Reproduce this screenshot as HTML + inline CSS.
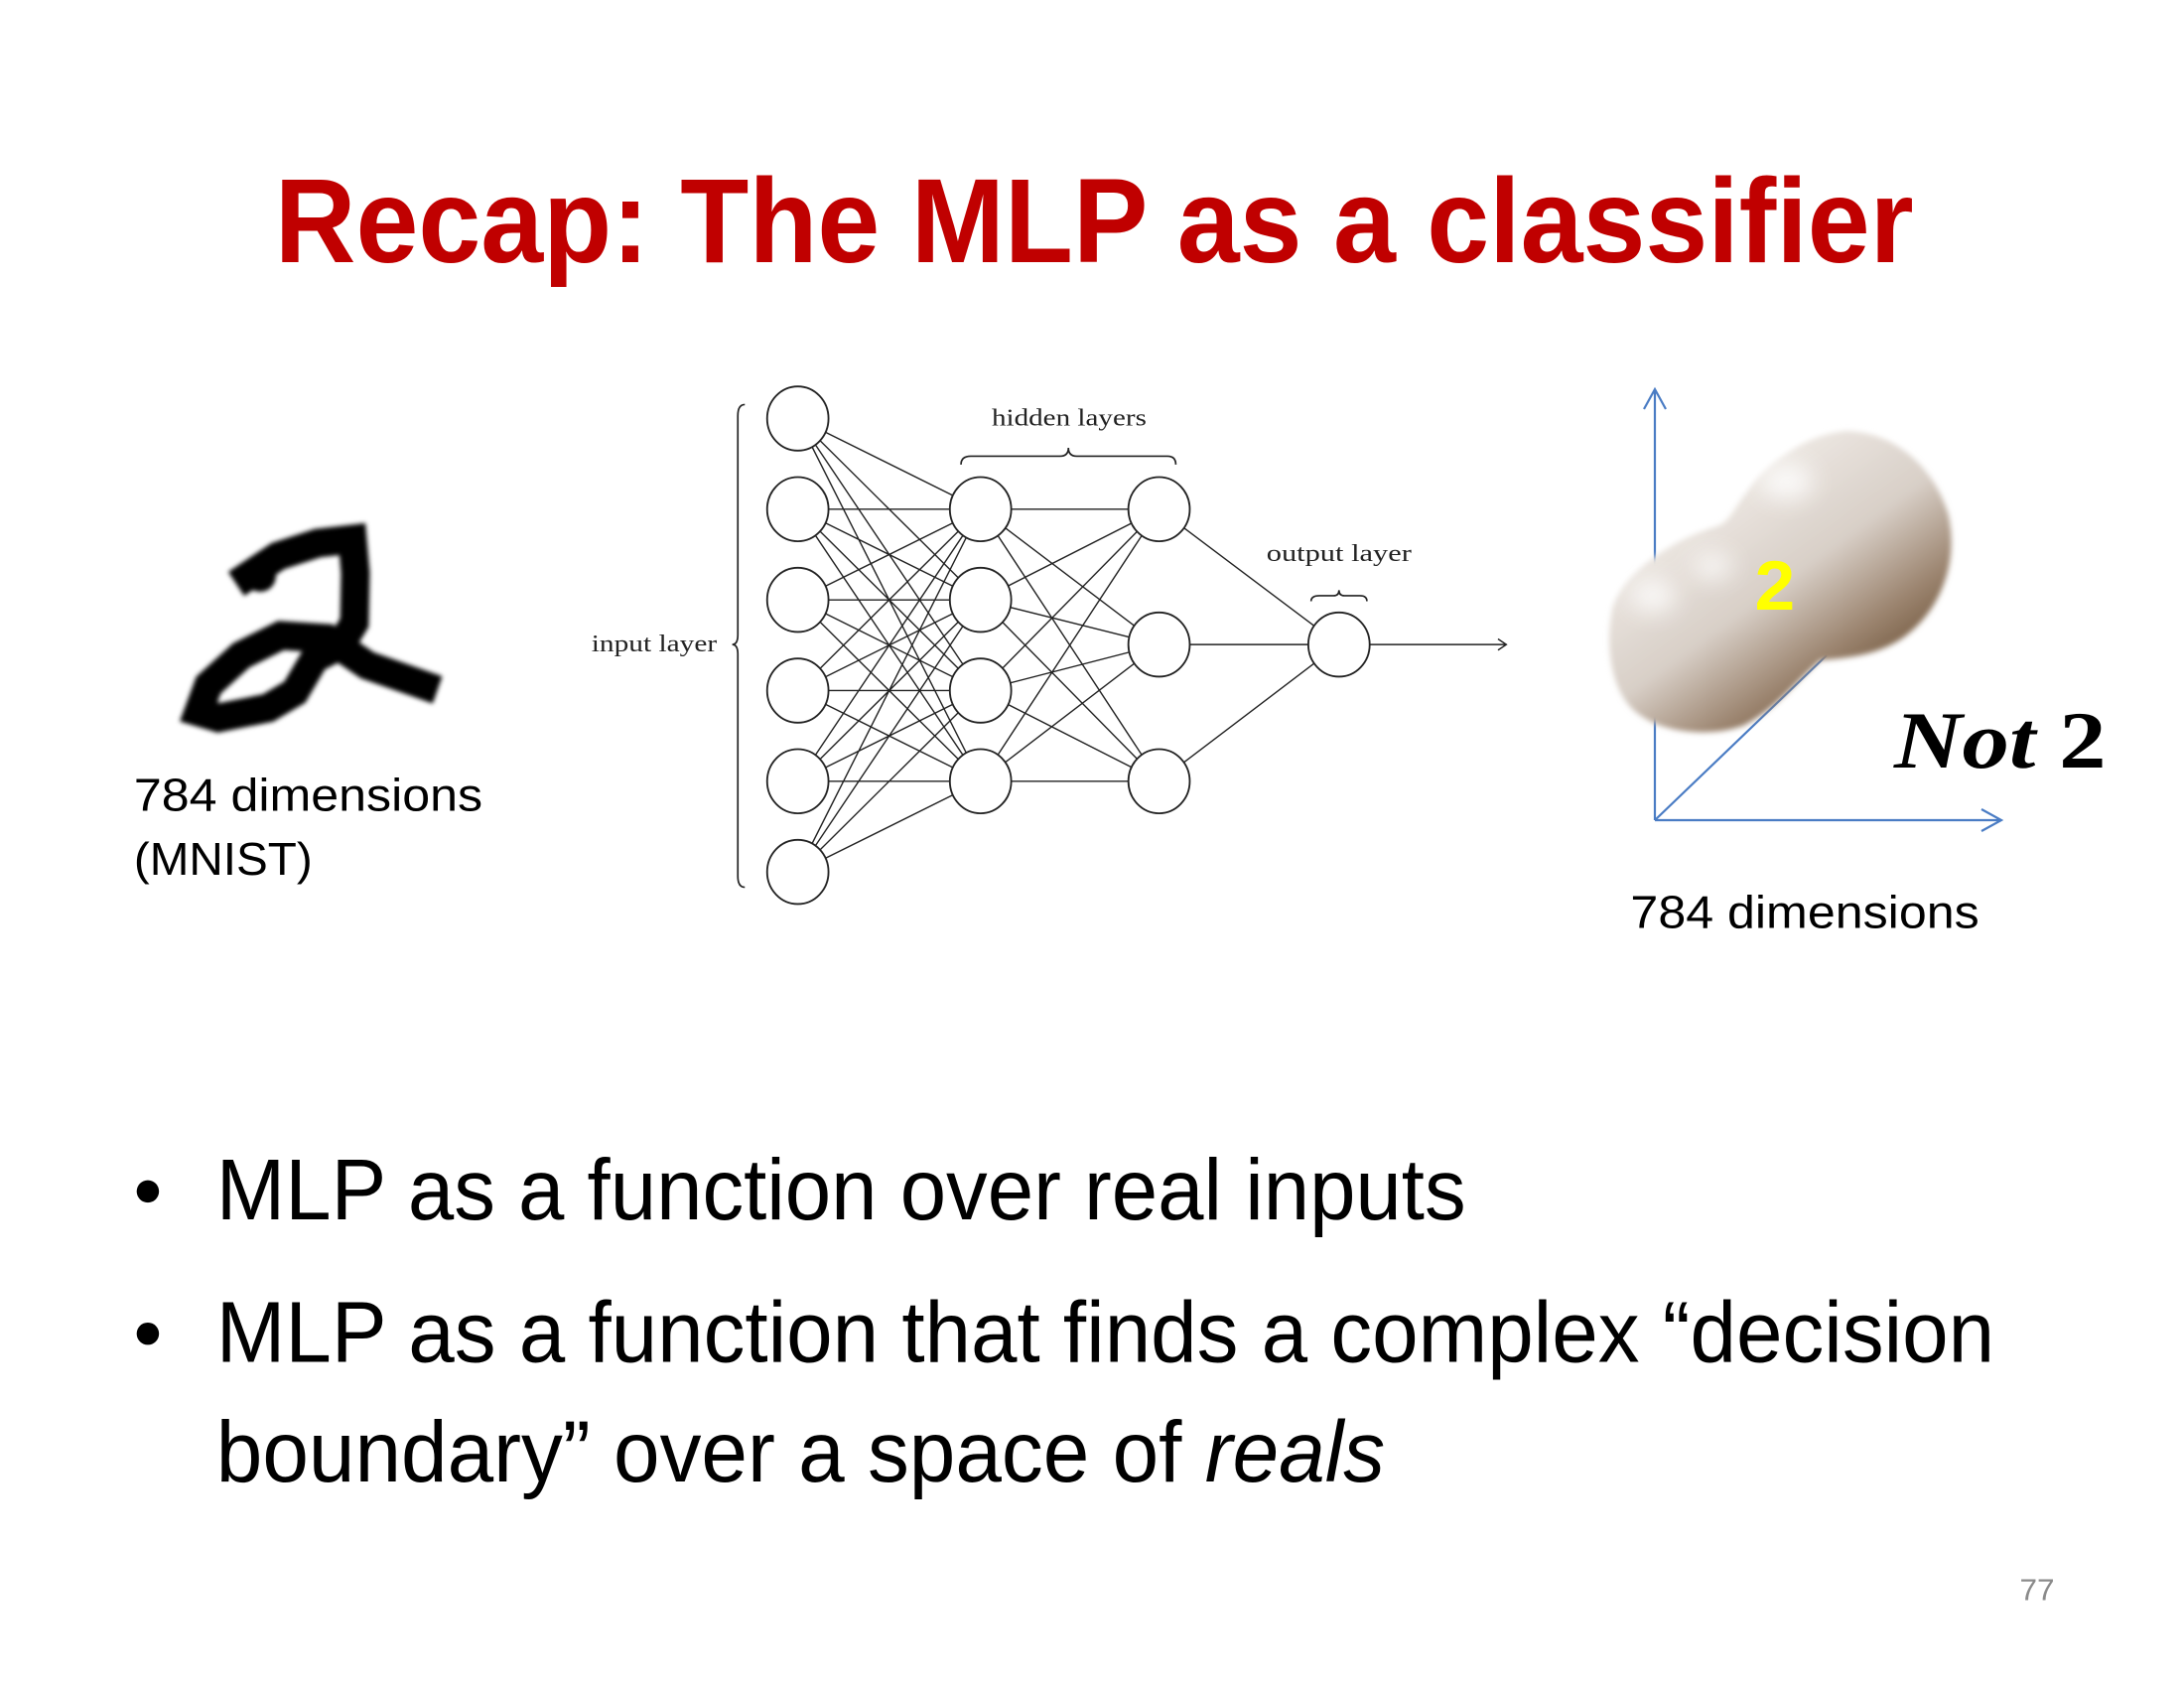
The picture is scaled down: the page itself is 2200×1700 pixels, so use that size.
<!DOCTYPE html>
<html><head><meta charset="utf-8"><style>html,body{margin:0;padding:0;background:#fff;}svg{display:block}</style></head>
<body>
<svg width="2200" height="1700" viewBox="0 0 2200 1700" xmlns="http://www.w3.org/2000/svg">
<defs>
<filter id="b1" x="-20%" y="-20%" width="140%" height="140%"><feGaussianBlur stdDeviation="2.5"/></filter>
<filter id="b2" x="-20%" y="-20%" width="140%" height="140%"><feGaussianBlur stdDeviation="3"/></filter>
<filter id="b3" x="-50%" y="-50%" width="200%" height="200%"><feGaussianBlur stdDeviation="12"/></filter>
<linearGradient id="g" gradientUnits="userSpaceOnUse" x1="1720" y1="470" x2="1900" y2="720">
<stop offset="0" stop-color="#f2eeea"/>
<stop offset="0.45" stop-color="#d8cfc7"/>
<stop offset="0.72" stop-color="#9c8570"/>
<stop offset="1" stop-color="#5c4024"/>
</linearGradient>
</defs>
<rect width="2200" height="1700" fill="#fff"/>

<!-- MNIST digit -->
<g filter="url(#b1)" fill="none" stroke="#000" stroke-width="29" stroke-linejoin="miter" stroke-linecap="square">
<polyline points="250,580 280,560 320,547 355,543 358,577 357,627 343,650 317,663 297,697 270,713 220,723 200,717 210,690 243,660 283,640 330,643 370,670 427,690"/>
<circle cx="262" cy="580" r="16" fill="#000" stroke="none"/>
</g>

<!-- axes (actual coords) -->
<g stroke="#4a7cc4" stroke-width="2.2" fill="none">
<path d="M1667 826L1667 392M1656 412L1667 392L1678 412"/>
<path d="M1667 826L2016 826M1996 815L2016 826L1996 837"/>
<path d="M1667 826L1840 660"/>
</g>
<!-- blob -->
<g filter="url(#b2)">
<path fill="url(#g)" stroke="url(#g)" stroke-width="6" stroke-linejoin="round" d="M1627 613C1640 575 1690 545 1730 533C1745 528 1750 512 1760 500C1780 470 1820 440 1860 437C1905 438 1945 470 1960 520C1970 570 1950 615 1915 640C1890 657 1860 660 1833 662C1810 680 1790 710 1755 728C1720 740 1675 735 1650 715C1625 695 1620 650 1627 613Z"/>
</g>
<g filter="url(#b3)" fill="#fff" opacity="0.85">
<ellipse cx="1800" cy="485" rx="26" ry="18"/>
<ellipse cx="1665" cy="600" rx="22" ry="16"/>
<ellipse cx="1725" cy="570" rx="20" ry="12"/>
</g>

<g transform="scale(1.405)">
<!-- title -->
<text x="197" y="188" font-family="Liberation Sans, sans-serif" font-weight="bold" font-size="86" fill="#c00000" textLength="1175" lengthAdjust="spacingAndGlyphs">Recap: The MLP as a classifier</text>

<text x="96" y="581" font-family="Liberation Sans, sans-serif" font-size="33" fill="#000" textLength="250" lengthAdjust="spacingAndGlyphs">784 dimensions</text>
<text x="96" y="627" font-family="Liberation Sans, sans-serif" font-size="33" fill="#000" textLength="128" lengthAdjust="spacingAndGlyphs">(MNIST)</text>

<!-- network -->
<g stroke="#222" stroke-width="1" fill="none">
<path d="M572 300L703 365M572 300L703 430M572 300L703 495M572 300L703 560
M572 365L703 365M572 365L703 430M572 365L703 495M572 365L703 560
M572 430L703 365M572 430L703 430M572 430L703 495M572 430L703 560
M572 495L703 365M572 495L703 430M572 495L703 495M572 495L703 560
M572 560L703 365M572 560L703 430M572 560L703 495M572 560L703 560
M572 625L703 365M572 625L703 430M572 625L703 495M572 625L703 560
M703 365L831 365M703 365L831 462M703 365L831 560
M703 430L831 365M703 430L831 462M703 430L831 560
M703 495L831 365M703 495L831 462M703 495L831 560
M703 560L831 365M703 560L831 462M703 560L831 560
M831 365L960 462M831 462L960 462M831 560L960 462M960 462L1080 462M1074 458L1080 462L1074 466"/>
<path d="M534 290Q529 290 529 298L529 455Q529 462 525 462Q529 462 529 469L529 628Q529 636 534 636" stroke-width="1.2"/>
<path d="M689 333Q689 327 696 327L760 327Q766 327 766 321Q766 327 772 327L837 327Q843 327 843 333" stroke-width="1.2"/>
<path d="M940 431Q940 427 946 427L956 427Q960 427 960 423Q960 427 964 427L975 427Q980 427 980 431" stroke-width="1.2"/>
</g>
<g fill="#fff" stroke="#222" stroke-width="1.3">
<ellipse cx="572" cy="300" rx="22" ry="23"/><ellipse cx="572" cy="365" rx="22" ry="23"/><ellipse cx="572" cy="430" rx="22" ry="23"/><ellipse cx="572" cy="495" rx="22" ry="23"/><ellipse cx="572" cy="560" rx="22" ry="23"/><ellipse cx="572" cy="625" rx="22" ry="23"/>
<ellipse cx="703" cy="365" rx="22" ry="23"/><ellipse cx="703" cy="430" rx="22" ry="23"/><ellipse cx="703" cy="495" rx="22" ry="23"/><ellipse cx="703" cy="560" rx="22" ry="23"/>
<ellipse cx="831" cy="365" rx="22" ry="23"/><ellipse cx="831" cy="462" rx="22" ry="23"/><ellipse cx="831" cy="560" rx="22" ry="23"/>
<ellipse cx="960" cy="462" rx="22" ry="23"/>
</g>
<g font-family="Liberation Serif, serif" font-size="17" fill="#222">
<text x="424" y="467" textLength="90" lengthAdjust="spacingAndGlyphs">input layer</text>
<text x="711" y="305" textLength="111" lengthAdjust="spacingAndGlyphs">hidden layers</text>
<text x="908" y="402" textLength="104" lengthAdjust="spacingAndGlyphs">output layer</text>
</g>

<text x="1258" y="437" font-family="Liberation Sans, sans-serif" font-weight="bold" font-size="50" fill="#ffff00" textLength="29" lengthAdjust="spacingAndGlyphs">2</text>
<text x="1358" y="550" font-family="Liberation Serif, serif" font-weight="bold" font-size="58" fill="#000" textLength="152" lengthAdjust="spacingAndGlyphs"><tspan font-style="italic">Not</tspan> 2</text>
<text x="1169" y="665" font-family="Liberation Sans, sans-serif" font-size="33" fill="#000" textLength="250" lengthAdjust="spacingAndGlyphs">784 dimensions</text>

<!-- bullets -->
<g font-family="Liberation Sans, sans-serif" font-size="62" fill="#000">
<circle cx="106" cy="854" r="8"/>
<circle cx="106" cy="956" r="8"/>
<text x="155" y="874" textLength="896" lengthAdjust="spacingAndGlyphs">MLP as a function over real inputs</text>
<text x="155" y="976" textLength="1275" lengthAdjust="spacingAndGlyphs">MLP as a function that finds a complex “decision</text>
<text x="155" y="1062" textLength="838" lengthAdjust="spacingAndGlyphs">boundary” over a space of <tspan font-style="italic">reals</tspan></text>
</g>
<text x="1448" y="1147" font-family="Liberation Sans, sans-serif" font-size="22" fill="#8a8a8a" textLength="25" lengthAdjust="spacingAndGlyphs">77</text>
</g>
</svg>
</body></html>
